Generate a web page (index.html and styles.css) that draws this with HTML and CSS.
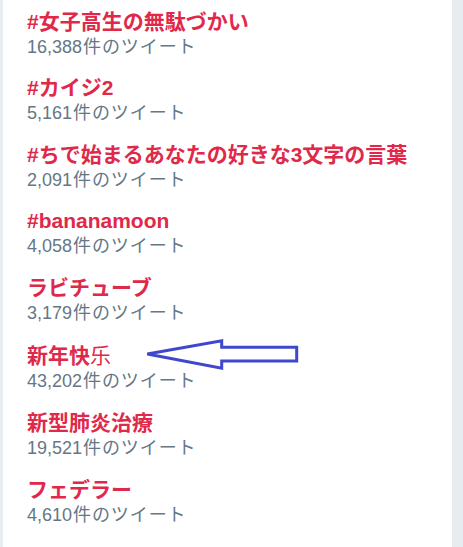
FILE: index.html
```html
<!DOCTYPE html>
<html lang="ja">
<head>
<meta charset="utf-8">
<title>トレンド</title>
<link rel="stylesheet" href="styles.css">
</head>
<body>
<div class="panel">
  <ul class="trends">
    <li class="trend"><div class="name">#女子高生の無駄づかい</div><div class="meta">16,388<span class="unit">件のツイート</span></div></li>
    <li class="trend"><div class="name">#カイジ2</div><div class="meta">5,161<span class="unit">件のツイート</span></div></li>
    <li class="trend"><div class="name">#ちで始まるあなたの好きな3文字の言葉</div><div class="meta">2,091<span class="unit">件のツイート</span></div></li>
    <li class="trend"><div class="name">#bananamoon</div><div class="meta">4,058<span class="unit">件のツイート</span></div></li>
    <li class="trend"><div class="name">ラビチューブ</div><div class="meta">3,179<span class="unit">件のツイート</span></div></li>
    <li class="trend"><div class="name">新年快<span class="fallback">乐</span></div><div class="meta">43,202<span class="unit">件のツイート</span></div></li>
    <li class="trend"><div class="name">新型肺炎治療</div><div class="meta">19,521<span class="unit">件のツイート</span></div></li>
    <li class="trend"><div class="name">フェデラー</div><div class="meta">4,610<span class="unit">件のツイート</span></div></li>
  </ul>
  <svg class="arrow" width="156" height="34" viewBox="0 0 156 34">
    <polygon points="2.3,16 76.7,2.7 76.7,9.3 151.7,9.3 151.7,23 76.7,23 76.7,30.3" fill="none" stroke="#3f48cc" stroke-width="3" stroke-linejoin="miter"/>
  </svg>
</div>
</body>
</html>
```

FILE: styles.css
```css
html, body {
  margin: 0;
  padding: 0;
  background: #e6ecf0;
}
body {
  height: 547px;
  overflow: hidden;
}
.panel {
  position: relative;
  margin-left: 3px;
  width: 449px;
  height: 547px;
  background: #ffffff;
}
.trends {
  list-style: none;
  margin: 0;
  padding: 8.5px 0 0 24px;
}
.trend {
  padding-bottom: 16.6px;
}
.name {
  font-family: "Liberation Sans", "Noto Sans CJK JP", sans-serif;
  font-weight: 700;
  font-size: 21px;
  line-height: 26px;
  color: #e0294a;
  white-space: nowrap;
}
.fallback {
  font-weight: 400;
  font-family: "Noto Sans CJK SC", sans-serif;
}
.meta {
  font-family: "Liberation Sans", "Noto Sans CJK JP", sans-serif;
  font-size: 18px;
  line-height: 24px;
  color: #657786;
  white-space: nowrap;
}
.unit {
  letter-spacing: 0.9px;
  margin-left: 1px;
}
.arrow {
  position: absolute;
  left: 142px;
  top: 338px;
}
```
